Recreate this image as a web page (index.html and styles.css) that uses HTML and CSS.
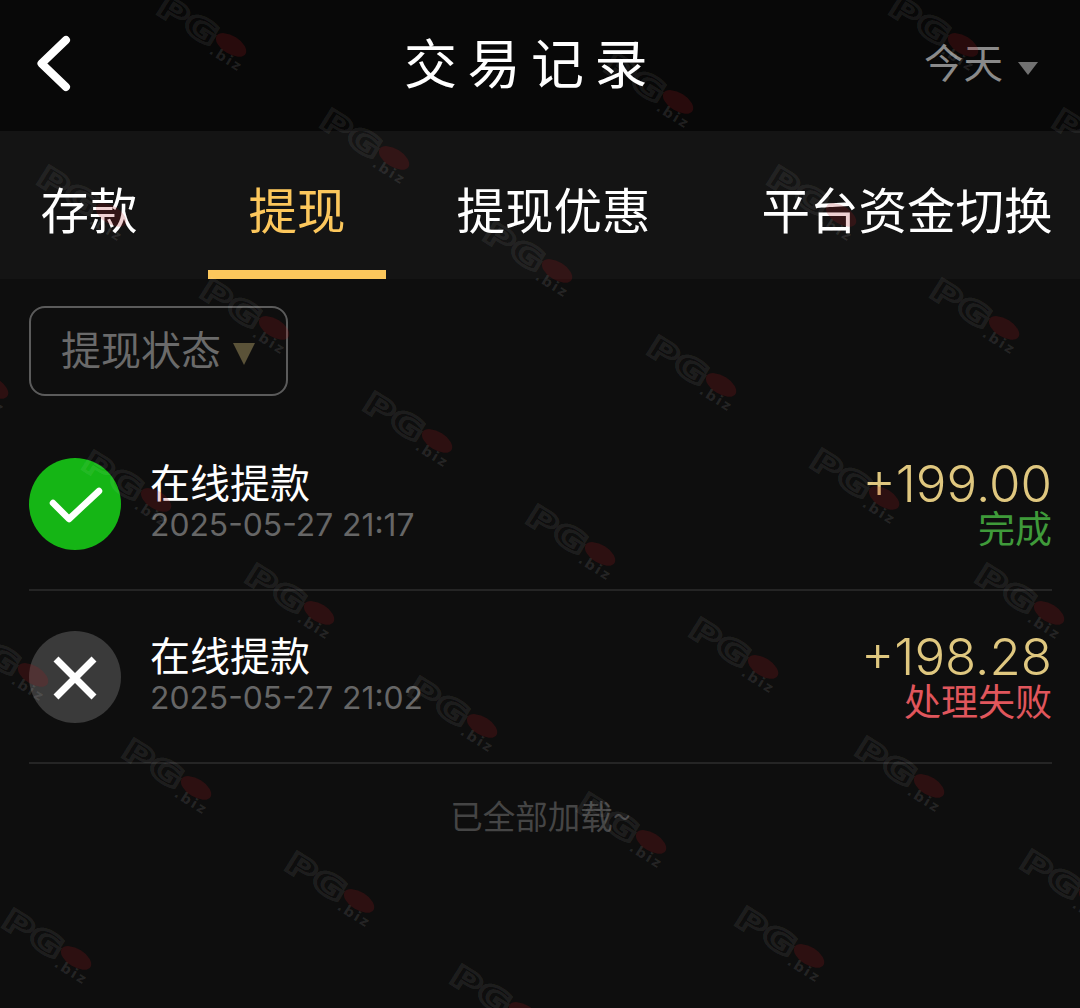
FILE: index.html
```html
<!DOCTYPE html>
<html lang="zh-CN">
<head>
  <meta charset="UTF-8">
  <title>交易记录</title>
  <link rel="stylesheet" href="styles.css">
</head>
<body>
  <header class="top-bar">
    <button class="back-button" aria-label="返回">
      <svg width="42" height="64" viewBox="0 0 42 64"><path d="M36 7 L11.500 30.500 L36 54" fill="none" stroke="#fff" stroke-width="8" stroke-linecap="round" stroke-linejoin="round"/></svg>
    </button>
    <h1 class="page-title">交易记录</h1>
    <div class="date-filter">今天<span class="date-arrow"></span></div>
  </header>

  <nav class="tabs">
    <div class="tab">存款</div>
    <div class="tab active">提现</div>
    <div class="tab">提现优惠</div>
    <div class="tab">平台资金切换</div>
  </nav>

  <main class="content">
    <div class="status-filter">提现状态<span class="status-arrow"></span></div>

    <div class="record">
      <div class="record-icon success">
        <svg width="92" height="92" viewBox="0 0 92 92"><path d="M24 45 L40 61 L70 33" fill="none" stroke="#fff" stroke-width="6.500" stroke-linecap="round" stroke-linejoin="round"/></svg>
      </div>
      <div class="record-info">
        <div class="record-name">在线提款</div>
        <div class="record-date">2025-05-27 21:17</div>
      </div>
      <div class="record-right">
        <div class="record-amount">+199.00</div>
        <div class="record-status done">完成</div>
      </div>
    </div>

    <div class="record">
      <div class="record-icon failed">
        <svg width="92" height="92" viewBox="0 0 92 92"><path d="M27 28 L65 66 M65 28 L27 66" fill="none" stroke="#fff" stroke-width="7"/></svg>
      </div>
      <div class="record-info">
        <div class="record-name">在线提款</div>
        <div class="record-date">2025-05-27 21:02</div>
      </div>
      <div class="record-right">
        <div class="record-amount">+198.28</div>
        <div class="record-status fail">处理失败</div>
      </div>
    </div>

    <div class="load-end">已全部加载~</div>
  </main>

  <!-- watermark layer, free placed over the whole page -->
  <svg class="watermarks" width="1080" height="1008" viewBox="0 0 1080 1008">
    <defs>
      <g id="wm" transform="rotate(32)">
        <text class="wm-pg" x="9" y="15" textLength="66" lengthAdjust="spacingAndGlyphs">PG</text>
        <ellipse class="wm-blob" cx="91" cy="2" rx="17" ry="9"/>
        <text class="wm-biz" x="76" y="21">.biz</text>
      </g>
    </defs>
    <use href="#wm" x="155" y="-5"/>
    <use href="#wm" x="318" y="108"/>
    <use href="#wm" x="481" y="221"/>
    <use href="#wm" x="645" y="335"/>
    <use href="#wm" x="808" y="448"/>
    <use href="#wm" x="973" y="563"/>
    <use href="#wm" x="35" y="165"/>
    <use href="#wm" x="198" y="278"/>
    <use href="#wm" x="361" y="391"/>
    <use href="#wm" x="524" y="504"/>
    <use href="#wm" x="687" y="617"/>
    <use href="#wm" x="853" y="736"/>
    <use href="#wm" x="1018" y="849"/>
    <use href="#wm" x="-83" y="337"/>
    <use href="#wm" x="80" y="450"/>
    <use href="#wm" x="243" y="563"/>
    <use href="#wm" x="406" y="676"/>
    <use href="#wm" x="575" y="792"/>
    <use href="#wm" x="733" y="906"/>
    <use href="#wm" x="-43" y="625"/>
    <use href="#wm" x="120" y="738"/>
    <use href="#wm" x="283" y="851"/>
    <use href="#wm" x="448" y="964"/>
    <use href="#wm" x="0" y="908"/>
    <use href="#wm" x="602" y="52"/>
    <use href="#wm" x="765" y="165"/>
    <use href="#wm" x="928" y="278"/>
    <use href="#wm" x="887" y="-5"/>
    <use href="#wm" x="1050" y="108"/>
  </svg>
</body>
</html>
```

FILE: styles.css
```css
* {
  box-sizing: border-box;
}

body {
  position: relative;
  width: 1080px;
  height: 1008px;
  margin: 0;
  overflow: hidden;
  background-color: #0e0e0e;
  color: #fff;
  font-family: "Noto Sans CJK SC", "Noto Sans", sans-serif;
}

.top-bar {
  display: flex;
  align-items: center;
  height: 131px;
  padding: 0 42px 0 30px;
  background-color: #080808;
}

.back-button {
  display: flex;
  width: 42px;
  margin-top: -2px;
  padding: 0;
  border: none;
  background: none;
}

.page-title {
  margin: -10px 0 0 332px;
  font-size: 53px;
  font-weight: 400;
  letter-spacing: 10.500px;
  line-height: 60px;
}

.date-filter {
  display: flex;
  align-items: center;
  margin: -10px 0 0 auto;
  color: #8a8a8a;
  font-size: 39.500px;
  line-height: 50px;
}

.date-arrow {
  width: 0;
  height: 0;
  margin: 16px 0 0 15px;
  border-top: 13px solid #717171;
  border-left: 10px solid transparent;
  border-right: 10px solid transparent;
}

.tabs {
  display: flex;
  gap: 30px;
  height: 148px;
  background-color: #141414;
}

.tab {
  height: 148px;
  padding: 0 40.500px;
  font-size: 48.500px;
  line-height: 154px;
  white-space: nowrap;
}

.tab.active {
  border-bottom: 9px solid #fcc75c;
  color: #fcc75c;
}

.content {
  padding: 27px 28px 0 29px;
}

.status-filter {
  display: flex;
  align-items: center;
  width: 259px;
  height: 90px;
  margin-bottom: 22px;
  padding: 0 0 6px 30px;
  border: 2px solid #5b5b5b;
  border-radius: 16px;
  color: #6a6a6a;
  font-size: 40px;
}

.status-arrow {
  width: 0;
  height: 0;
  margin: 12px 0 0 12px;
  border-top: 22px solid #5a5238;
  border-left: 11px solid transparent;
  border-right: 11px solid transparent;
}

.record {
  display: flex;
  align-items: center;
  height: 173px;
  border-bottom: 2px solid #252525;
}

.record-icon {
  width: 92px;
  height: 92px;
  margin-right: 29px;
  border-radius: 50%;
}

.record-icon svg {
  display: block;
}

.record-icon.success {
  background-color: #15b515;
}

.record-icon.failed {
  background-color: #3a3a3a;
}

.record-info {
  flex-grow: 1;
}

.record-name {
  margin-top: -1px;
  font-size: 40px;
  line-height: 43px;
}

.record-date {
  color: #666;
  font-family: Inter, sans-serif;
  font-size: 31.800px;
  line-height: 43px;
}

.record-right {
  text-align: right;
}

.record-amount {
  padding-top: 2px;
  color: #dfc77f;
  font-family: Inter, sans-serif;
  font-size: 51px;
  font-weight: 350;
  line-height: 46px;
}

.record-status {
  margin-top: -1px;
  font-size: 37px;
  line-height: 42px;
}

.record-status.done {
  color: #3f9a3a;
}

.record-status.fail {
  color: #e0565c;
}

.load-end {
  margin-top: 29px;
  color: #454545;
  font-size: 32.500px;
  line-height: 44px;
  text-align: center;
}

.watermarks {
  position: absolute;
  top: 0;
  left: 0;
  pointer-events: none;
}

.wm-pg {
  fill: rgba(255, 255, 255, 0.02);
  stroke: rgba(255, 255, 255, 0.08);
  stroke-width: 3px;
  font-family: "DejaVu Sans", sans-serif;
  font-size: 30px;
  font-weight: 700;
}

.wm-blob {
  fill: rgba(170, 25, 30, 0.2);
}

.wm-biz {
  fill: rgba(255, 255, 255, 0.1);
  font-family: "DejaVu Sans", sans-serif;
  font-size: 14px;
  font-weight: 700;
  letter-spacing: 2px;
}
```
